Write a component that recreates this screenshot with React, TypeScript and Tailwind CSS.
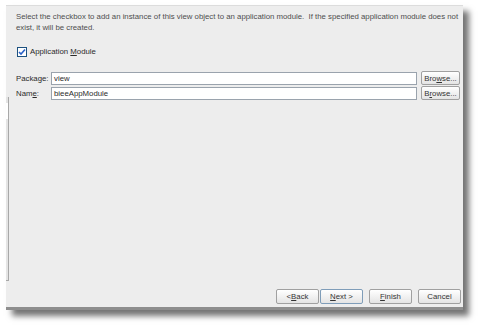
import React from 'react';

const font = { fontFamily: '"Liberation Sans", Arial, sans-serif' };

function Btn({ children, focused, h = 'h-[15px]' }: { children: React.ReactNode; focused?: boolean; h?: string }) {
  return (
    <div
      className={`${h} flex items-center justify-center whitespace-nowrap rounded-[2px] bg-gradient-to-b from-white to-[#e4e4e4] text-[7.8px] text-[#333] border ${
        focused ? 'border-[#7f9db9]' : 'border-[#a0a0a0]'
      }`}
    >
      {children}
    </div>
  );
}

export default function App() {
  return (
    <div className="w-[478px] h-[325px] bg-white pl-[6px] pt-[5px]" style={font}>
      <div className="relative w-[457px] h-[305px] bg-[#ededed] border-t border-[#dcdcdc] border-b-[3px] border-b-[#8e8e8e] shadow-[6px_6px_6px_rgba(0,0,0,0.55)]">
        {/* left edge strip */}
        <div className="absolute left-0 top-[91px] w-[3px] h-[184px] border-r border-b border-[#a8a8a8] bg-[#e4e4e4]">
          <div className="mt-[6px] h-[16px] bg-white" />
        </div>

        <div className="pl-[10px] pr-[3px] pt-[5px] text-[7.8px] text-[#4d4d4d] leading-[11px]">
          <p>
            Select the checkbox to add an instance of this view object to an application module.&nbsp; If the specified application module does not exist, it will be created.
          </p>

          <div className="flex items-center gap-[3px] mt-[13px] ml-[1px]">
            <div className="w-[10px] h-[10px] border border-[#1c5180] bg-white flex items-center justify-center">
              <svg width="8" height="8" viewBox="0 0 8 8">
                <path d="M1 4 L3 6 L7 1.5" fill="none" stroke="#2a62c8" strokeWidth="1.6" />
              </svg>
            </div>
            <span className="text-[#2b2b2b]">
              Application <u>M</u>odule
            </span>
          </div>

          <div className="mt-[14px] flex flex-col gap-[1px]">
            <div className="flex items-center">
              <span className="w-[35px] whitespace-nowrap text-[#2b2b2b]">
                Packa<u>g</u>e:
              </span>
              <div className="w-[366px] h-[13px] bg-white border border-[#9aa3ad] flex items-center pl-[2px] text-[#2b2b2b]">view</div>
              <div className="ml-[4px] w-[39px]">
                <Btn h="h-[14px]">
                  Bro<u>w</u>se...
                </Btn>
              </div>
            </div>
            <div className="flex items-center">
              <span className="w-[35px] whitespace-nowrap text-[#2b2b2b]">
                Nam<u>e</u>:
              </span>
              <div className="w-[366px] h-[13px] bg-white border border-[#9aa3ad] flex items-center pl-[2px] text-[#2b2b2b]">bieeAppModule</div>
              <div className="ml-[4px] w-[39px]">
                <Btn h="h-[14px]">
                  B<u>r</u>owse...
                </Btn>
              </div>
            </div>
          </div>
        </div>

        <div className="absolute right-[2px] bottom-[3px] flex">
          <div className="w-[43px]">
            <Btn>
              &lt; <u>B</u>ack
            </Btn>
          </div>
          <div className="w-[43px] ml-[1px]">
            <Btn focused>
              <u>N</u>ext &gt;
            </Btn>
          </div>
          <div className="w-[43px] ml-[6px]">
            <Btn>
              <u>F</u>inish
            </Btn>
          </div>
          <div className="w-[43px] ml-[6px]">
            <Btn>Cancel</Btn>
          </div>
        </div>
      </div>
    </div>
  );
}
